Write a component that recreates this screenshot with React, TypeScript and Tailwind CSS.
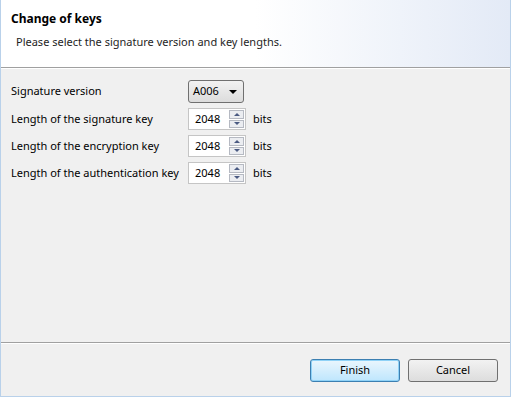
import React, { useState } from 'react';

const font = { fontFamily: '"Segoe UI", "Noto Sans", Arial, sans-serif' };

function Spinner({ value }: { value: string }) {
  return (
    <div className="flex h-[22px] w-[58px] items-center border border-[#c5c5c5] bg-white">
      <span className="flex-1 pl-[6px] text-[11px] text-black">{value}</span>
      <div className="mr-[1px] flex h-[18px] w-[15px] flex-col gap-[1px]">
        <div className="flex flex-1 items-center justify-center border border-[#b5b9c2] bg-[#ebedf1]">
          <div className="h-0 w-0 border-x-[3px] border-b-[3px] border-x-transparent border-b-[#4a5a82]" />
        </div>
        <div className="flex flex-1 items-center justify-center border border-[#b5b9c2] bg-[#ebedf1]">
          <div className="h-0 w-0 border-x-[3px] border-t-[3px] border-x-transparent border-t-[#4a5a82]" />
        </div>
      </div>
    </div>
  );
}

export default function App() {
  const [version] = useState('A006');
  const rows = [
    'Length of the signature key',
    'Length of the encryption key',
    'Length of the authentication key',
  ];

  return (
    <div
      className="flex h-[397px] w-[511px] flex-col border-x border-b border-[#b9d1ea] bg-[#f0f0f0] text-[11px] text-black"
      style={font}
    >
      {/* header */}
      <div className="h-[67px] bg-gradient-to-r from-white via-white to-[#e3eaf6] px-[10px] pt-[10px]">
        <div className="text-[12px] font-bold text-black">Change of keys</div>
        <div className="mt-[6px] pl-[5px] text-[11px] text-[#1e1e1e]">
          Please select the signature version and key lengths.
        </div>
      </div>
      <div className="h-px bg-[#a0a0a0]" />
      <div className="h-px bg-white" />

      {/* form */}
      <div className="flex-1 px-[10px] pt-[11px]">
        <div className="grid grid-cols-[177px_auto_1fr] items-center gap-y-[5px] whitespace-nowrap">
          <div>Signature version</div>
          <div className="flex h-[23px] w-[56px] items-center justify-between rounded-[3px] border border-[#707070] bg-gradient-to-b from-[#f2f2f2] to-[#dcdcdc] pl-[4px] pr-[6px]">
            <span>{version}</span>
            <div className="h-0 w-0 border-x-[4px] border-t-[4px] border-x-transparent border-t-black" />
          </div>
          <div />
          {rows.map((r) => (
            <React.Fragment key={r}>
              <div>{r}</div>
              <Spinner value="2048" />
              <div className="pl-[7px]">bits</div>
            </React.Fragment>
          ))}
        </div>
      </div>

      {/* footer */}
      <div className="h-px bg-[#a0a0a0]" />
      <div className="h-px bg-white" />
      <div className="flex h-[52px] items-start justify-end gap-[8px] pr-[12px] pt-[15px]">
        <button className="h-[23px] w-[90px] rounded-[3px] border border-[#3c7fb1] bg-gradient-to-b from-[#eaf6fd] to-[#bee6fd] text-[11px] text-black shadow-[inset_0_0_0_1px_#8fd2f7]">
          Finish
        </button>
        <button className="h-[23px] w-[90px] rounded-[3px] border border-[#707070] bg-gradient-to-b from-[#f2f2f2] to-[#dddddd] text-[11px] text-black">
          Cancel
        </button>
      </div>
    </div>
  );
}
